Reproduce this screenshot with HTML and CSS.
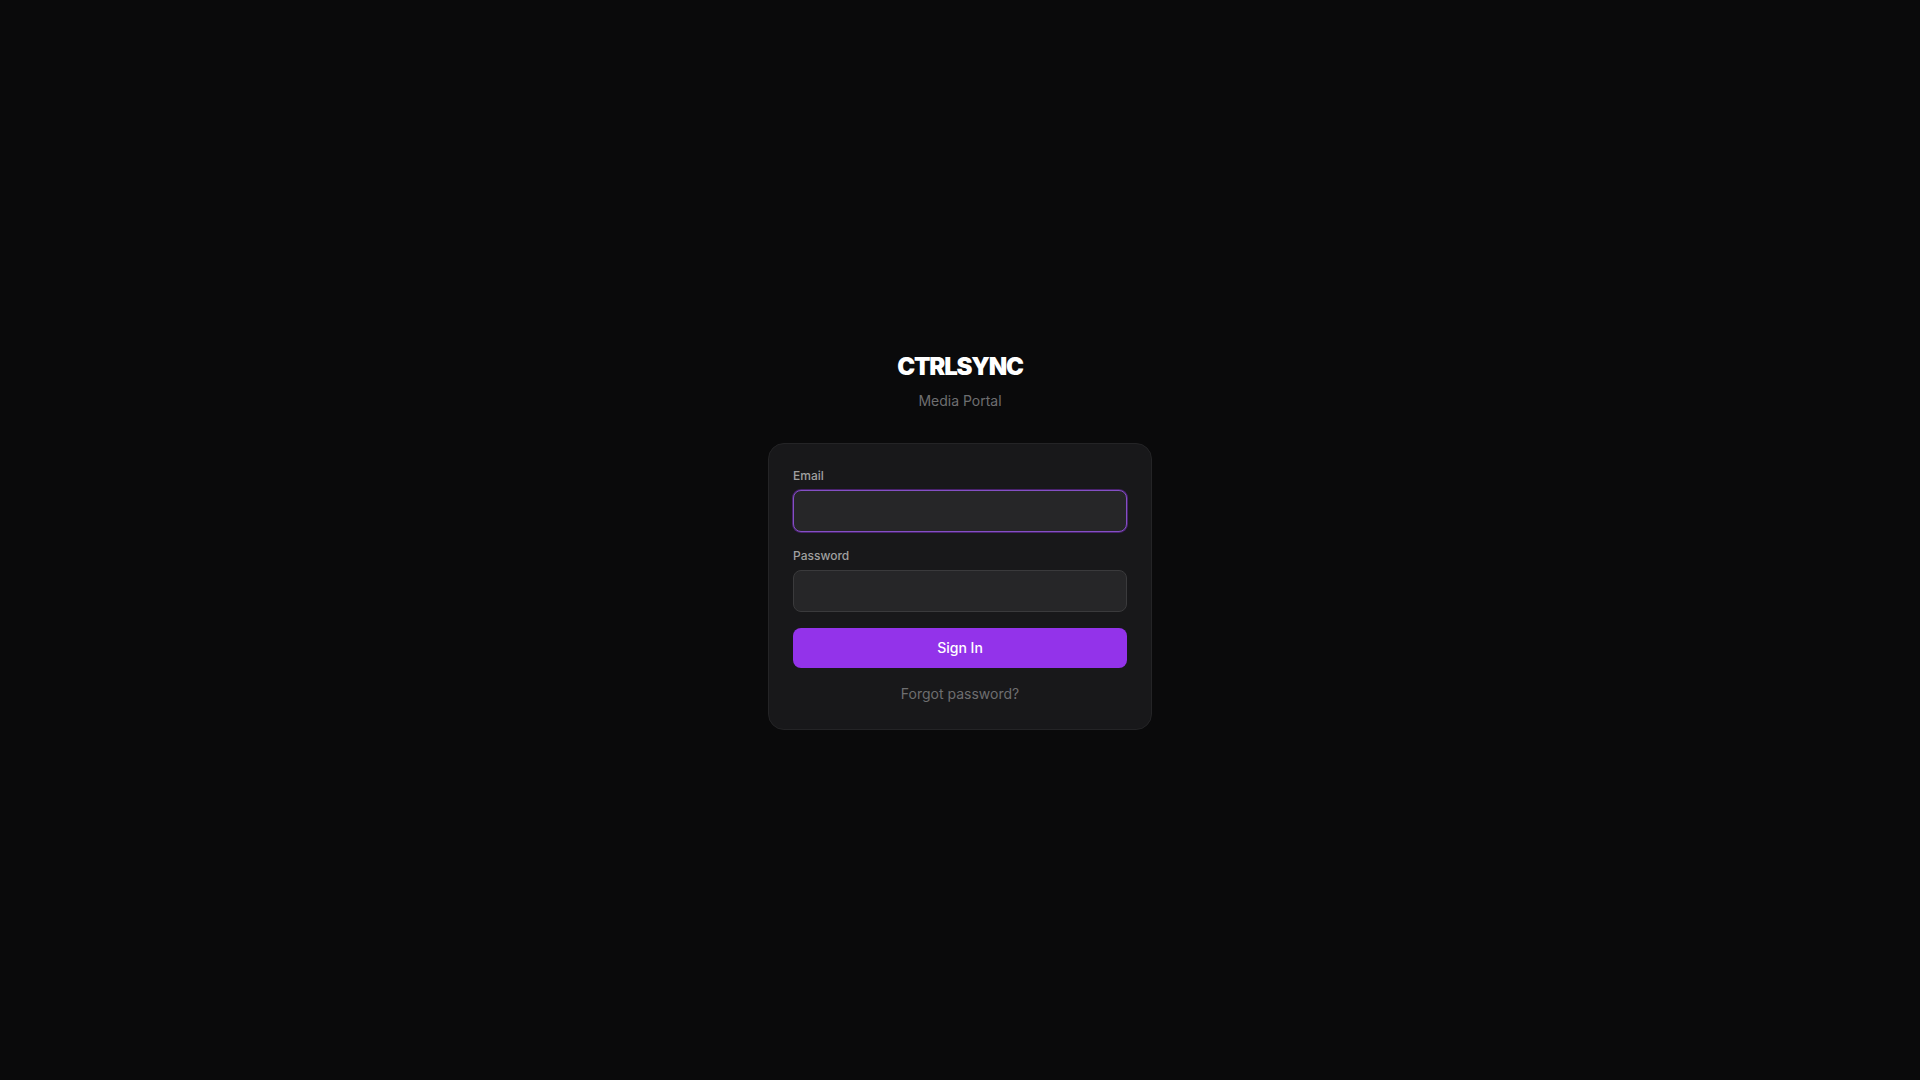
FILE: index.html
```html
<!DOCTYPE html>
<html lang="en">
<head>
    <meta charset="UTF-8">
    <title>CTRLSYNC - Media Portal</title>
    <link rel="stylesheet" href="styles.css">
</head>
<body>

    <main class="login">
        <div class="brand">
            <h1 class="brand-name">CTRLSYNC</h1>
            <p class="brand-sub">Media Portal</p>
        </div>

        <form class="card">
            <div class="field">
                <label for="email">Email</label>
                <input type="email" id="email" class="input input-focus">
            </div>
            <div class="field">
                <label for="password">Password</label>
                <input type="password" id="password" class="input">
            </div>
            <button type="button" class="btn">Sign In</button>
            <a href="#" class="forgot">Forgot password?</a>
        </form>
    </main>

</body>
</html>
```

FILE: styles.css
```css
* {
    box-sizing: border-box;
}

body {
    margin: 0;
    min-height: 100vh;
    display: flex;
    align-items: center;
    justify-content: center;
    background-color: #0a0a0b;
    font-family: 'Inter', sans-serif;
    color: #fff;
}

.login {
    width: 384px;
}

.brand {
    text-align: center;
    margin-bottom: 32px;
}

.brand-name {
    margin: 0;
    font-size: 24px;
    line-height: 32px;
    font-weight: 900;
    letter-spacing: -1.2px;
    color: #fff;
}

.brand-sub {
    margin: 8px 0 0;
    font-size: 14px;
    line-height: 20px;
    color: #6e6e70;
}

.card {
    display: flex;
    flex-direction: column;
    gap: 16px;
    padding: 24px 24px 25px;
    background-color: #18181a;
    border: 1px solid #242426;
    border-radius: 16px;
}

.field label {
    display: block;
    margin-bottom: 6px;
    font-size: 12px;
    line-height: 16px;
    font-weight: 500;
    color: #a0a0a0;
}

.input {
    display: block;
    width: 100%;
    height: 42px;
    padding: 10px 16px;
    background-color: #262628;
    border: 1px solid #3a3a3c;
    border-radius: 8px;
    color: #fff;
    font-size: 14px;
    font-family: inherit;
    outline: none;
}

.input-focus {
    border-color: #8450c4;
    box-shadow: 0 0 0 1px rgba(147, 51, 234, 0.4);
}

.btn {
    height: 40px;
    background-color: #9333ea;
    border: none;
    border-radius: 8px;
    color: #fff;
    font-size: 14px;
    font-weight: 500;
    font-family: inherit;
    cursor: pointer;
}

.forgot {
    display: block;
    text-align: center;
    font-size: 14px;
    line-height: 20px;
    color: #6e6e70;
    text-decoration: none;
}
```
